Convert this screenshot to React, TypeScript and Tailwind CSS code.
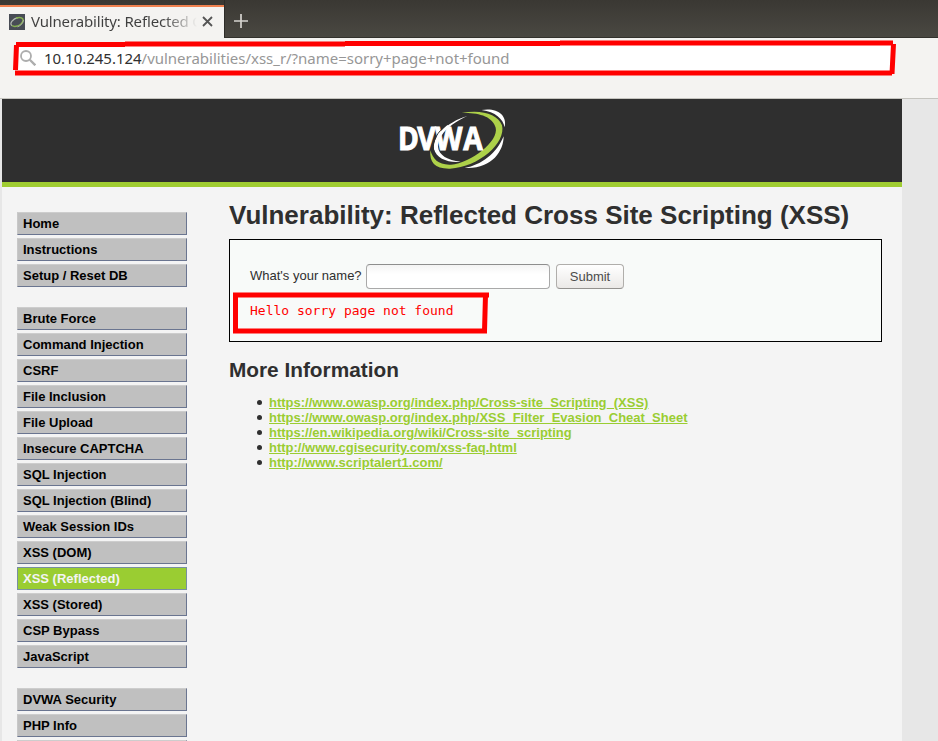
const menuGroups: string[][] = [
  ["Home", "Instructions", "Setup / Reset DB"],
  [
    "Brute Force",
    "Command Injection",
    "CSRF",
    "File Inclusion",
    "File Upload",
    "Insecure CAPTCHA",
    "SQL Injection",
    "SQL Injection (Blind)",
    "Weak Session IDs",
    "XSS (DOM)",
    "XSS (Reflected)",
    "XSS (Stored)",
    "CSP Bypass",
    "JavaScript",
  ],
  ["DVWA Security", "PHP Info", ""],
];

const links = [
  "https://www.owasp.org/index.php/Cross-site_Scripting_(XSS)",
  "https://www.owasp.org/index.php/XSS_Filter_Evasion_Cheat_Sheet",
  "https://en.wikipedia.org/wiki/Cross-site_scripting",
  "http://www.cgisecurity.com/xss-faq.html",
  "http://www.scriptalert1.com/",
];

function TabBar() {
  return (
    <div className="flex h-[38px] shrink-0 border-b border-[#33322d] bg-gradient-to-b from-[#3a3833] to-[#4a4842]">
      <div className="-mb-px mt-[5px] flex w-[224px] shrink-0 items-center border-t-2 border-[#f0814f] bg-[#f4f3f1] pb-[2px] pl-[9px]">
        <svg className="shrink-0" width="16" height="16" viewBox="0 0 16 16">
          <rect width="16" height="16" fill="#484c55" />
          <path d="M9 3.600C4 4.500 0 9.500 3 11.800" fill="none" stroke="#b4bab4" strokeWidth="1.2" />
          <path d="M7 4C14 2 16 6 12 10C9 12.500 5 13.200 3 11.500" fill="none" stroke="#86b052" strokeWidth="1.5" />
          <path d="M14.600 6C14 10 11 12 8.500 12.900" fill="none" stroke="#b4bab4" strokeWidth=".8" />
        </svg>
        <div className="-mt-px ml-[6px] w-[166px] shrink-0 whitespace-nowrap bg-gradient-to-r from-[#3f3f3f] from-80% to-transparent bg-clip-text text-[15px] leading-[20px] tracking-[-0.16px] text-transparent">
          Vulnerability: Reflected C
        </div>
        <svg className="ml-[5px] shrink-0" width="11" height="11" viewBox="0 0 11 11">
          <path d="M1 1l9 9M10 1l-9 9" stroke="#555" strokeWidth="1.800" />
        </svg>
      </div>
      <div className="flex w-[32px] items-center justify-center border-l border-[#2d2c28] pt-1">
        <svg width="14" height="14" viewBox="0 0 14 14">
          <path d="M7 0v14M0 7h14" stroke="#d6d4cf" strokeWidth="1.700" />
        </svg>
      </div>
    </div>
  );
}

function AddressBar() {
  return (
    <div className="h-[61px] shrink-0 border-b border-[#c5c4bf] bg-[#f4f3f1] pl-[16px] pt-[7px]">
      <div className="flex h-[28px] w-[876px] items-center bg-white pl-[4px]">
        <svg className="-mt-[2px]" width="16" height="16" viewBox="0 0 16 16" fill="none" stroke="#adadad">
          <circle cx="6" cy="6" r="5" strokeWidth="1.800" />
          <path d="M9.800 9.800l5.500 5.500" strokeWidth="2.300" />
        </svg>
        <div className="-mt-[2px] ml-[8px] whitespace-nowrap text-[15px] leading-[20px]">
          <span className="tracking-[-0.02px] text-[#303030]">10.10.245.124</span>
          <span className="tracking-[-0.02px] text-[#979797]">/vulnerabilities/xss_r/?name=sorry+page+not+found</span>
        </div>
      </div>
    </div>
  );
}

function Logo() {
  return (
    <svg width="150" height="83" viewBox="0 12 450 249">
      <path d="M262 63C198 82 158 126 162 161C168 191 206 204 242 200C203 196 176 180 174 155C173 123 208 87 262 63Z" fill="#fff" />
      <path d="M305 45C349 37 383 59 374 97C369 72 346 50 305 45Z" fill="#fff" />
      <path d="M371 124C371 170 333 224 254 219C305 210 350 175 371 124Z" fill="#fff" />
      <path d="M245 54C304 43 353 57 366 91C379 143 297 217 210 221C165 222 148 203 151 166C159 193 176 211 213 209C274 203 357 138 347 98C338 64 296 52 245 54Z" fill="#add149" />
      <text
        x="61 127 188 284"
        y="165"
        transform="scale(.88 1)"
        fontFamily="Open Sans, sans-serif"
        fontWeight="700"
        fontSize="96"
        fill="#fff"
        stroke="#fff"
        strokeWidth="3"
      >
        DVWA
      </text>
      <path d="M199 91C171 111 158 137 160 166" fill="none" stroke="#2f2f2f" strokeWidth="3" />
      <path d="M204 92C178 113 163 137 165 164" fill="none" stroke="#fff" strokeWidth="5" />
    </svg>
  );
}

function Menu() {
  return (
    <nav className="mt-[25px] flex w-[170px] shrink-0 flex-col gap-[20px] text-[13px] font-bold">
      {menuGroups.map((group) => (
        <ul key={group[0]} className="flex flex-col gap-[3px]">
          {group.map((item) => (
            <li
              key={item}
              className={
                item === "XSS (Reflected)"
                  ? "h-[23px] border border-[#7890a0] bg-[#9acd32] pl-[5px] leading-[21px] text-[#f4f4f4]"
                  : "h-[23px] border border-b-[#6a7590] border-l-[#c8c8c8] border-r-[#6a7590] border-t-[#cdcdcd] bg-[#c0c0c0] pl-[5px] leading-[21px] text-black"
              }
            >
              {item}
            </li>
          ))}
        </ul>
      ))}
    </nav>
  );
}

function Content() {
  return (
    <main className="ml-[42px] w-[653px] text-[#2f2f2f]">
      <h1 className="mt-[12px] h-[32px] whitespace-nowrap text-[26px] font-bold leading-[32px]">
        Vulnerability: Reflected Cross Site Scripting (XSS)
      </h1>
      <div className="mt-[8px] h-[103px] border border-black bg-[#f8faf9] pl-[20px] pt-[24px]">
        <form className="flex h-[25px] items-center text-[13px]" onSubmit={(e) => e.preventDefault()}>
          <label htmlFor="name" className="w-[116px] pb-[2px]">
            What's your name?
          </label>
          <input
            id="name"
            className="h-[25px] w-[184px] rounded-[4px] border border-[#a9a9a9] border-t-[#8e8e8e] bg-gradient-to-b from-[#f4f4f4] to-white to-40%"
          />
          <button className="ml-[6px] h-[25px] w-[68px] rounded-[4px] border border-[#b0aeab] border-b-[#94928f] bg-gradient-to-b from-white to-[#ebe9e7] text-[#4c4c4c]">
            Submit
          </button>
        </form>
        <pre className="mt-[14px] font-['DejaVu_Sans_Mono',monospace] text-[13px] leading-[16px] text-[#ff0000]">
          Hello sorry page not found
        </pre>
      </div>
      <h2 className="mt-[16px] text-[20.800px] font-bold leading-[24px]">More Information</h2>
      <ul className="mt-[13px] pl-[28px] text-[13px] leading-[15px]">
        {links.map((link) => (
          <li key={link} className="flex items-center">
            <span className="mr-[7px] size-[5px] rounded-full bg-[#2f2f2f]" />
            <a href={link} className="font-bold text-[#9acd32] underline">
              {link}
            </a>
          </li>
        ))}
      </ul>
    </main>
  );
}

/* Hand-drawn markers around the address bar and the greeting. */
function Markers() {
  return (
    <svg className="pointer-events-none absolute left-0 top-0" width="938" height="741" fill="none" stroke="#ff0000" strokeWidth="5">
      <path d="M16 44.500H125M125 44H345M345 43.500H560M560 43H893" />
      <path d="M16.500 45L15.500 70M15 73H240M240 73H892M893.500 44L892 74" />
      <path d="M233 295H489M235.500 295V331M233 331H487M485.500 295L484.500 331" />
    </svg>
  );
}

export default function App() {
  return (
    <div className="relative flex h-[741px] w-[938px] flex-col overflow-hidden bg-[#e7e7e7] font-['Liberation_Sans',Arial,sans-serif]">
      <div className="font-['Noto_Sans',sans-serif]">
        <TabBar />
        <AddressBar />
      </div>
      <div className="ml-[2px] min-h-0 w-[900px] flex-1 bg-[#f4f4f4]">
        <header className="flex h-[88px] border-b-[5px] border-[#a0cd32] bg-[#2f2f2f] pl-[378px]">
          <Logo />
        </header>
        <div className="flex pl-[15px]">
          <Menu />
          <Content />
        </div>
      </div>
      <Markers />
    </div>
  );
}
